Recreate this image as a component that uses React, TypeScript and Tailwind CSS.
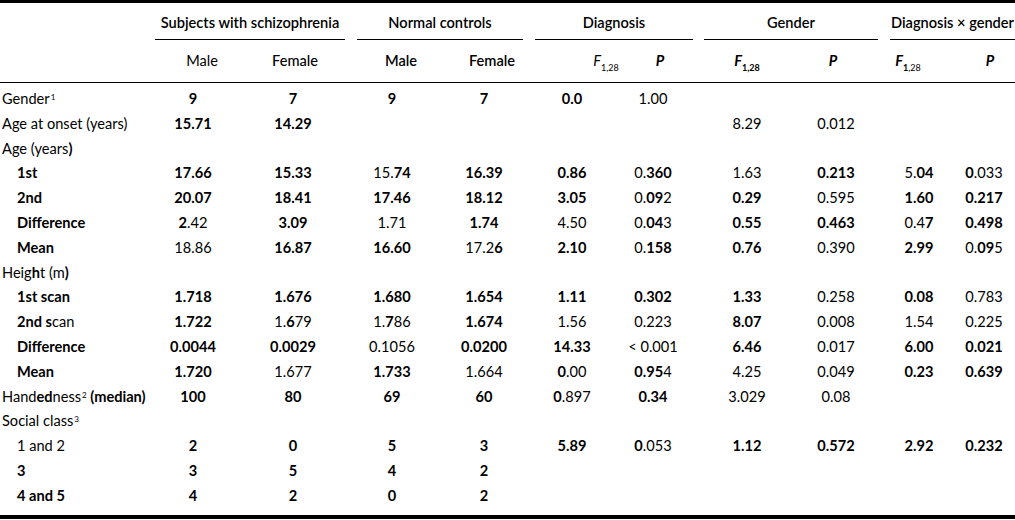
import React from 'react';

const COLS =
  'grid grid-cols-[145px_96px_104px_94px_90px_86px_76px_112px_66px_100px_46px]';

// "*...*" marks the bold parts of a value, as in the scanned table
const fmt = (s: string) =>
  s.split('*').map((p, i) =>
    i % 2 ? (
      <span key={i} className="font-bold">
        {p}
      </span>
    ) : (
      <span key={i}>{p}</span>
    )
  );

type Row = { label: React.ReactNode; indent?: boolean; cells: string[] };

const rows: Row[] = [
  {
    label: (
      <>
        Gender<sup className="text-[8px] ml-[1px]">1</sup>
      </>
    ),
    cells: ['*9*', '*7*', '*9*', '*7*', '*0.0*', '1.00', '', '', '', ''],
  },
  {
    label: 'Age at onset (years)',
    cells: ['*15.71*', '*14.29*', '', '', '', '', '8.29', '0.012', '', ''],
  },
  { label: fmt('Age (years*)*'), cells: [] },
  {
    label: fmt('*1st*'),
    indent: true,
    cells: ['*17.66*', '*15.33*', '15.*74*', '*16.39*', '*0.86*', '0.*360*', '1.63', '*0.213*', '5.*04*', '*0*.033'],
  },
  {
    label: fmt('*2nd*'),
    indent: true,
    cells: ['*20.07*', '*18.41*', '*17.46*', '*18.12*', '*3.05*', '0.*09*2', '*0.29*', '0.595', '*1.60*', '*0.217*'],
  },
  {
    label: fmt('*Difference*'),
    indent: true,
    cells: ['*2*.42', '*3.09*', '1.71', '*1.74*', '4.50', '0.*04*3', '*0.55*', '*0.463*', '0.4*7*', '*0.498*'],
  },
  {
    label: fmt('*Mean*'),
    indent: true,
    cells: ['18.86', '*16.87*', '*16.60*', '17.2*6*', '*2.10*', '0.*158*', '*0.76*', '0.390', '*2.99*', '0.*09*5'],
  },
  { label: fmt('Heig*h*t (m*)*'), cells: [] },
  {
    label: fmt('*1st scan*'),
    indent: true,
    cells: ['*1.718*', '*1.676*', '*1.680*', '*1.654*', '*1.11*', '*0.302*', '*1.33*', '0.258', '*0.08*', '0.783'],
  },
  {
    label: fmt('*2nd s*can'),
    indent: true,
    cells: ['*1.722*', '1.*6*79', '1.*7*86', '*1.674*', '1.56', '0.223', '*8.07*', '0.008', '1.54', '0.225'],
  },
  {
    label: fmt('*Difference*'),
    indent: true,
    cells: ['*0.0044*', '*0.0029*', '0.1056', '*0.0200*', '*14.33*', '< 0.001', '*6.46*', '0.017', '*6.00*', '*0.021*'],
  },
  {
    label: fmt('*Mean*'),
    indent: true,
    cells: ['*1.720*', '1.677', '*1.733*', '1.664', '*0*.00', '*0.95*4', '4.25', '0.049', '*0.23*', '*0.639*'],
  },
  {
    label: (
      <>
        {fmt('Hand*ed*ness')}
        <sup className="text-[8px] ml-[1px]">2</sup>
        <span className="font-bold"> (median)</span>
      </>
    ),
    cells: ['*100*', '*80*', '*69*', '*60*', '*0*.897', '*0.34*', '3.029', '0.08', '', ''],
  },
  {
    label: (
      <>
        Social class<sup className="text-[8px] ml-[1px]">3</sup>
      </>
    ),
    cells: [],
  },
  {
    label: '1 and 2',
    indent: true,
    cells: ['*2*', '*0*', '*5*', '*3*', '*5.89*', '*0*.053', '*1.12*', '*0.572*', '*2.92*', '*0.232*'],
  },
  { label: fmt('*3*'), indent: true, cells: ['*3*', '*5*', '*4*', '*2*'] },
  { label: fmt('*4 and 5*'), indent: true, cells: ['*4*', '*2*', '*0*', '*2*'] },
];

const dataPad = ['', '', '', '', '', '', '', '', '', 'pr-[16px]'];

const F = ({ bold, subBold }: { bold?: boolean; subBold?: boolean }) => (
  <span className={bold ? 'italic font-bold' : 'italic'}>
    F
    <sub className="not-italic text-[9px] align-[-3px]">
      {subBold ? <span className="font-bold">1</span> : '1'}
      {subBold ? <span className="font-normal">,28</span> : ',28'}
    </sub>
  </span>
);

export default function App() {
  return (
    <div
      className="w-[1015px] h-[520px] bg-white text-black text-[14.6px] leading-none"
      style={{ fontFamily: 'Lato, "Open Sans", sans-serif' }}
    >
      <div className="border-t-[3px] border-black">
        {/* group headers */}
        <div className={`${COLS} h-[37px] font-semibold`}>
          <div />
          <div className="col-span-2 ml-[10px] border-b border-black flex items-center justify-center pt-[5px]">
            Subjects with schizophrenia
          </div>
          <div className="col-span-2 ml-[12px] mr-[6px] border-b border-black flex items-center justify-center pt-[5px]">
            Normal controls
          </div>
          <div className="col-span-2 ml-[6px] mr-[-2px] border-b border-black flex items-center justify-center pt-[5px]">
            Diagnosis
          </div>
          <div className="col-span-2 ml-[13px] mr-[-9px] border-b border-black flex items-center justify-center pt-[5px]">
            Gender
          </div>
          <div className="col-span-2 ml-[21px] border-b border-black flex items-center justify-center pt-[5px] whitespace-nowrap">
            Diagnosis × gender
          </div>
        </div>
        {/* sub headers */}
        <div className={`${COLS} h-[43px] pt-[2px] border-b border-black items-center pb-[1px]`}>
          <div />
          <div className="flex justify-center pl-[18px]">Male</div>
          <div className="flex justify-center pl-[4px] font-medium">Female</div>
          <div className="flex justify-center pl-[18px] font-semibold">Male</div>
          <div className="flex justify-center pl-[16px] font-semibold">Female</div>
          <div className="flex justify-center pl-[68px] whitespace-nowrap">
            <F />
          </div>
          <div className="flex justify-center pl-[14px] italic font-bold">P</div>
          <div className="flex justify-center whitespace-nowrap">
            <F bold />
          </div>
          <div className="flex justify-center pr-[6px] italic font-bold">P</div>
          <div className="flex justify-center pr-[22px] whitespace-nowrap">
            <F bold subBold />
          </div>
          <div className="flex justify-center pr-[4px] italic font-bold">P</div>
        </div>
        {/* body */}
        <div className="pt-[4px] pb-[6px] border-b-4 border-black">
          {rows.map((r, i) => (
            <div key={i} className={`${COLS} h-[24.8px] items-center`}>
              <div className={r.indent ? 'pl-[17px] whitespace-nowrap' : 'pl-[2px] whitespace-nowrap'}>
                {typeof r.label === 'string' ? fmt(r.label) : r.label}
              </div>
              {Array.from({ length: 10 }).map((_, j) => (
                <div key={j} className={`flex justify-center whitespace-nowrap ${dataPad[j]}`}>
                  {r.cells[j] ? fmt(r.cells[j]) : null}
                </div>
              ))}
            </div>
          ))}
        </div>
      </div>
    </div>
  );
}
